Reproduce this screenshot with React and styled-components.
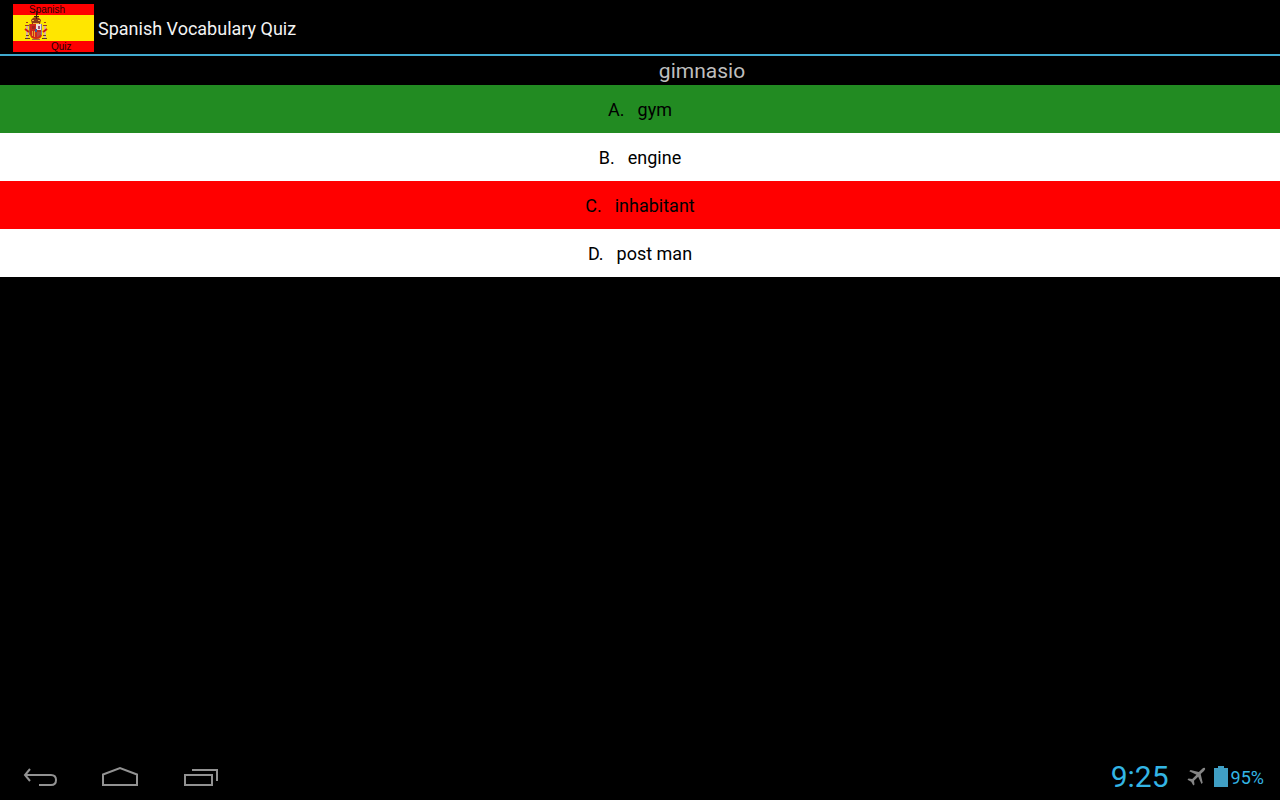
import styled, { createGlobalStyle } from 'styled-components';

const question = 'gimnasio';

const answers = [
  { id: 1, letter: 'A.', text: 'gym', status: 'correct' },
  { id: 2, letter: 'B.', text: 'engine' },
  { id: 3, letter: 'C.', text: 'inhabitant', status: 'wrong' },
  { id: 4, letter: 'D.', text: 'post man' },
];

const answerColors = {
  correct: '#228b22',
  wrong: '#ff0000',
};

const GlobalStyle = createGlobalStyle`
  * {
    box-sizing: border-box;
  }
  body {
    margin: 0;
    background: #000;
    font-family: Roboto, 'Liberation Sans', sans-serif;
  }
`;

const Logo = () => (
  <svg width="81" height="48" viewBox="0 0 81 48" aria-hidden="true">
    <rect width="81" height="48" fill="#ff0000" />
    <rect y="11" width="81" height="26" fill="#ffe600" />
    <g>
      <path d="M13 21h2v13h-2zM31 21h2v13h-2z" fill="#d9b49a" />
      <path d="M12 34.500h5M29 34.500h5M13 31.500h3M30 31.500h3" stroke="#6b3a20" />
      <path d="M12 21.500h4M30 21.500h4M13 18.500h2M31 18.500h2" stroke="#a03c18" />
      <path d="M12 25l4 3M34 25l-4 3" stroke="#d01818" strokeWidth="2" />
      <path d="M18 16q2-3 5-3t5 3l-1 4h-8z" fill="#8e3a14" />
      <path d="M19 16.500h2M25 16.500h2M20 19.500h6" stroke="#f4b430" />
      <path d="M17 20h12v10q0 5-6 5t-6-5z" fill="#d02818" />
      <path d="M23 20h5v6h-5z" fill="#ebe2dc" />
      <path d="M25 22h2v3h-2z" fill="#a04a70" />
      <path d="M19 22h3v3h-3z" fill="#a3261d" />
      <path d="M19.500 27v5M21.500 27v6" stroke="#eda32c" />
      <path d="M24 28h4v2l-3 3h-1z" fill="#b8484c" />
      <path d="M22 25h2v3h-2z" fill="#3f5a9c" />
      <path d="M28.500 20v11" stroke="#8c8298" />
      <path d="M16.500 20v11M19 35.500h8" stroke="#a06a4a" />
      <path d="M23.500 7v8M21 12.500h5" stroke="#40200c" />
    </g>
    <LogoText x="16" y="9">Spanish</LogoText>
    <LogoText x="38" y="46">Quiz</LogoText>
  </svg>
);

const BackIcon = () => (
  <svg width="36" height="24" viewBox="0 0 36 24" aria-hidden="true">
    <path d="M8 5L3 11L8 17M3 11H29Q34 11 34 16T29 21H17" />
  </svg>
);

const HomeIcon = () => (
  <svg width="38" height="24" viewBox="0 0 38 24" aria-hidden="true">
    <path d="M2 21V10.500L19 4L36 10.500V21Z" />
  </svg>
);

const RecentIcon = () => (
  <svg width="36" height="24" viewBox="0 0 36 24" aria-hidden="true">
    <path d="M3 11H30V21H3ZM10 6H35V17" />
  </svg>
);

const AirplaneIcon = () => (
  <svg width="19" height="19" viewBox="0 0 19 19" aria-label="Airplane mode" role="img">
    <path
      d="M18 1Q16.500.300 15 2L11.800 5L3.500 3L2.300 4.200L9.500 7.700L5.200 12L1.500 11.500L.500 12.700L4.200 14.700L6.300 18.500L7.500 17.500L7 13.700L11.200 9.700L14.500 17L15.700 15.800L13.700 7L17 4Q18.800 2.200 18 1Z"
      fill="#858585"
    />
  </svg>
);

const BatteryIcon = () => (
  <svg width="14" height="21" viewBox="0 0 14 21" aria-label="Battery" role="img">
    <path d="M4 0h6v2h4v19H0V2h4z" fill="#409fc4" />
  </svg>
);

const App = () => {
  return (
    <Screen>
      <GlobalStyle />
      <Header>
        <Logo />
        <Title>Spanish Vocabulary Quiz</Title>
      </Header>
      <Main>
        <Question>{question}</Question>
        {answers.map((answer) => {
          const { id, letter, text, status } = answer;
          return (
            <Answer key={id} type="button" $status={status}>
              <span>{letter}</span>
              <span>{text}</span>
            </Answer>
          );
        })}
      </Main>
      <SystemBar>
        <NavButtons>
          <NavButton type="button" aria-label="Back">
            <BackIcon />
          </NavButton>
          <NavButton type="button" aria-label="Home">
            <HomeIcon />
          </NavButton>
          <NavButton type="button" aria-label="Recent apps">
            <RecentIcon />
          </NavButton>
        </NavButtons>
        <StatusArea>
          <Clock>9:25</Clock>
          <AirplaneIcon />
          <BatteryInfo>
            <BatteryIcon />
            <BatteryLevel>95%</BatteryLevel>
          </BatteryInfo>
        </StatusArea>
      </SystemBar>
    </Screen>
  );
};

const Screen = styled.div`
  min-height: 100vh;
  display: flex;
  flex-direction: column;
  background: #000;
`;

const Header = styled.header`
  display: flex;
  align-items: center;
  gap: 4px;
  height: 56px;
  padding: 2px 13px 0;
  border-bottom: 2px solid #40a9cf;
`;

const LogoText = styled.text`
  font-family: 'Liberation Sans', sans-serif;
  font-size: 10px;
  fill: #2a0000;
`;

const Title = styled.h1`
  margin: 0;
  padding-top: 2px;
  color: #f3f3f3;
  font-size: 18px;
  font-weight: 400;
  line-height: 24px;
`;

const Main = styled.main`
  flex: 1;
  display: flex;
  flex-direction: column;
`;

const Question = styled.h2`
  margin: 0;
  padding: 1px 0 0 124px;
  color: #bebebe;
  font-size: 21px;
  font-weight: 400;
  line-height: 28px;
  text-align: center;
`;

const Answer = styled.button`
  display: flex;
  align-items: center;
  justify-content: center;
  gap: 13px;
  width: 100%;
  height: 48px;
  padding: 0;
  border: none;
  background: ${({ $status }) => answerColors[$status] || '#fff'};
  color: #000;
  font-family: inherit;
  font-size: 18px;
  cursor: pointer;
`;

const SystemBar = styled.footer`
  display: flex;
  align-items: center;
  justify-content: space-between;
  height: 48px;
  padding-right: 16px;
`;

const NavButtons = styled.nav`
  display: flex;
`;

const NavButton = styled.button`
  display: flex;
  align-items: center;
  justify-content: center;
  width: 80px;
  height: 48px;
  padding: 0;
  border: none;
  background: none;
  cursor: pointer;

  svg {
    fill: none;
    stroke: #929292;
    stroke-width: 2;
  }
`;

const StatusArea = styled.div`
  display: flex;
  align-items: center;
  color: #33b5e5;
`;

const Clock = styled.time`
  margin-right: 18px;
  padding-top: 2px;
  font-size: 30px;
  line-height: 48px;
`;

const BatteryInfo = styled.div`
  display: flex;
  align-items: center;
  gap: 3px;
  margin-left: 8px;
`;

const BatteryLevel = styled.span`
  padding-top: 2px;
  font-size: 18px;
`;

export default App;
